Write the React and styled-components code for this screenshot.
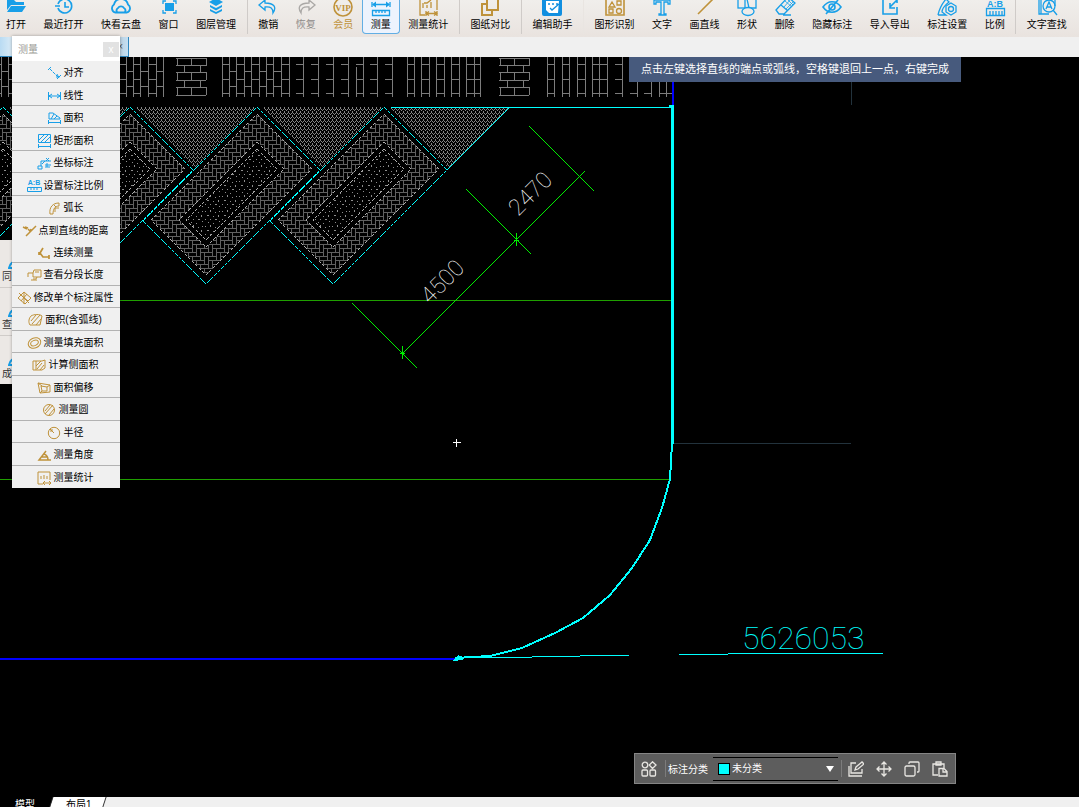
import React from "react";
import styled, { createGlobalStyle, css } from "styled-components";

const BLUE = "#189fe8";
const GOLD = "#bf923a";
const CYAN = "#00ffff";

const GlobalStyle = createGlobalStyle`
  * { box-sizing: border-box; }
  body {
    margin: 0;
    background: #000;
    font-family: "Liberation Sans", "Noto Sans CJK SC", sans-serif;
    font-size: 10px;
  }
  button, select {
    margin: 0;
    padding: 0;
    border: 0;
    background: none;
    font: inherit;
    color: inherit;
  }
`;

const Page = styled.div`
  display: flex;
  flex-direction: column;
  height: 100vh;
  overflow: hidden;
`;

const Toolbar = styled.header`
  display: flex;
  justify-content: space-between;
  align-items: flex-end;
  flex: none;
  height: 37px;
  padding: 0 6px 3px 0;
  overflow: hidden;
  background: linear-gradient(#f0eeeb, #e9e3df);
`;

const ToolButton = styled.button`
  display: flex;
  flex-direction: column;
  align-items: center;
  flex: none;
  gap: 2px;
  height: 40px;
  padding: 0 6px 2px;
  color: ${(p) => p.$color || "#000"};
  line-height: 14px;
  white-space: nowrap;
  ${(p) =>
    p.$active &&
    css`
      margin: 0 -3px;
      padding: 0 8px 1px;
      border: 1px solid #62aee4;
      border-top: 0;
      border-radius: 4px;
      background: #edf3fd;
    `}
  svg { display: block; flex: none; margin: 0 -1px; overflow: visible; }
`;

const ToolDivider = styled.i`
  flex: none;
  width: 1px;
  height: 40px;
  margin: 0 -1px;
  background: ${(p) => (p.$faint ? "#e9e5e1" : "#cfcbc8")};
`;

const FileStrip = styled.nav`
  display: flex;
  flex: none;
  height: 20px;
  background: #f0f0f0;
`;

const FileTab = styled.button`
  width: 129px;
  padding-right: 5px;
  border-right: 1px solid #2f86bd;
  border-bottom: 1px solid #2f86bd;
  background: linear-gradient(90deg, #b9dbf3, #dcecf7 10%, #b5c9d8 90%, #c5dff2);
  color: #555;
  text-align: right;
  line-height: 19px;
`;

const Canvas = styled.main`
  position: relative;
  flex: 1;
  min-height: 0;
  background: #000;
`;

const Drawing = styled.svg`
  display: block;
  width: 100%;
  height: 100%;
`;

const Hint = styled.p`
  position: absolute;
  top: 0;
  left: 629px;
  margin: 0;
  padding: 0 12px;
  background: #475a7d;
  color: #fff;
  font-size: 11px;
  line-height: 25px;
  white-space: nowrap;
`;

const SidePanel = styled.aside`
  position: absolute;
  top: 183px;
  left: 0;
  width: 60px;
  background: #ece8e5;
`;

const SideButton = styled.button`
  display: flex;
  flex-direction: column;
  align-items: flex-start;
  justify-content: flex-end;
  width: 100%;
  height: 48px;
  padding: 0 2px 2px;
  border-bottom: 1px solid #d0ccc9;
  color: #333;
  line-height: 16px;
  &:last-child { border-bottom: 0; }
  svg { margin-left: 6px; }
`;

const Palette = styled.section`
  position: absolute;
  top: -21px;
  left: 12px;
  width: 108px;
  background: #f0f0f0;
  box-shadow: 0 0 3px #0005;
`;

const PaletteHead = styled.header`
  display: flex;
  align-items: center;
  justify-content: space-between;
  height: 25px;
  padding: 0 1px 0 6px;
  background: #fff;
  color: #9a9a94;
`;

const CloseButton = styled.button`
  width: 16px;
  height: 15px;
  margin-top: 2px;
  background: #e2e2e2;
  color: #fff;
  line-height: 14px;
`;

const PaletteList = styled.div`
  display: grid;
  grid-auto-rows: 1fr;
  height: 427px;
`;

const PaletteButton = styled.button`
  display: flex;
  align-items: center;
  justify-content: center;
  gap: 2px;
  min-height: 0;
  padding: 3px 2px 0 0;
  border-bottom: 1px solid ${(p) => (p.$open ? "transparent" : "#b2b2b2")};
  color: #000;
  line-height: 14px;
  white-space: nowrap;
  &:last-child { border-bottom: 0; }
  svg { flex: none; }
`;

const Dock = styled.section`
  position: absolute;
  right: 123px;
  bottom: 13px;
  display: flex;
  align-items: center;
  width: 322px;
  height: 31px;
  padding: 0 7px 0 6px;
  border: 1px solid #858585;
  background: #5d5d5d;
  color: #fff;
`;

const DockDivider = styled.i`
  width: 1px;
  height: 17px;
  margin: ${(p) => p.$margin};
  background: #7c7c7c;
`;

const DockButton = styled.button`
  display: flex;
  & + & { margin-left: 12px; }
`;

const DockActions = styled.div`
  display: flex;
`;

const SelectWrap = styled.div`
  position: relative;
  flex: 1;
  height: 24px;
  margin-left: 5px;
  border: solid #000;
  border-width: 1px 0;
`;

const CategorySelect = styled.select`
  width: 100%;
  height: 22px;
  padding-left: 19px;
  appearance: none;
  color: #fff;
`;

const Swatch = styled.i`
  position: absolute;
  top: 5px;
  left: 5px;
  width: 12px;
  height: 12px;
  border: 1px solid #000;
  background: ${CYAN};
  pointer-events: none;
`;

const Arrow = styled.i`
  position: absolute;
  top: 8px;
  right: 4px;
  border: solid transparent;
  border-width: 6px 4px 0;
  border-top-color: #fff;
  pointer-events: none;
`;

const LayoutTabs = styled.footer`
  display: flex;
  flex: none;
  height: 10px;
  overflow: hidden;
  background: #f0f0f0;
`;

const LayoutTab = styled.button`
  position: relative;
  z-index: 0;
  flex: none;
  height: 16px;
  padding: ${(p) => (p.$current ? "0 16px 0 15px" : "0 12px 0 15px")};
  color: ${(p) => (p.$current ? "#fff" : "#000")};
  line-height: 16px;
  &::before {
    content: "";
    position: absolute;
    inset: 0 0 0 ${(p) => (p.$current ? "-10px" : "0")};
    z-index: -1;
    border-right: 1px solid #333;
    background: ${(p) => (p.$current ? "#000" : "#fff")};
    transform: skewX(-18deg);
  }
`;

function Glyph({ color, w = 22, h = 22, children, sw = 1.3 }) {
  return (
    <svg width={w} height={h} viewBox={`0 0 ${w} ${h}`} fill="none" stroke={color} strokeWidth={sw} aria-hidden="true">
      {children}
    </svg>
  );
}

const toolIcons = {
  folder: <g fill={BLUE} stroke="none"><path d="M2 16V6h7l2 2h8v3H6z" /><path d="M6 12h15l-4 6H2z" /></g>,
  history: <path strokeWidth="1.6" d="M5 10a7 7 0 1 1 0 4M2 12h5M12 8v5h4" />,
  cloud: <path strokeWidth="1.8" strokeLinejoin="round" d="M5 18.500a4.500 4.500 0 0 1-1-8a7.200 7.200 0 0 1 14 0a4.500 4.500 0 0 1-1 8zM7 18a3 3 0 0 1 1-4a3.500 3.500 0 0 1 6 0a3 3 0 0 1 1 4" />,
  window: <g><path fill={BLUE} stroke="none" d="M7 9h9v8H7z" /><path d="M5 10V7h3M15 7h3v3M18 16v3h-3M8 19H5v-3" /></g>,
  layers: <g fill={BLUE} stroke="none"><path d="M11 4l7 4-7 4-7-4z" /><path d="M5 11l6 3 6-3v2l-6 3.500L5 13zM5 15l6 3 6-3v2l-6 3L5 17z" /></g>,
  undo: <path d="M8 6l-6 5 6 5v-3c6-.5 8 1 8 6 4-6 1-10-8-10z" />,
  redo: <path d="M14 6l6 5-6 5v-3c-6-.5-8 1-8 6-4-6-1-10 8-10z" />,
  vip: <g><circle cx="11" cy="13" r="9" strokeWidth="1.600" /><text x="11" y="17" textAnchor="middle" fontSize="9" fontWeight="bold" fontFamily="Liberation Serif, serif" fill={GOLD} stroke="none">VIP</text></g>,
  measure: <g><path d="M2 8v5M20 8v5M3 10.500h16" /><path fill={BLUE} stroke="none" d="M2 10.500l4-3v6zM20 10.500l-4-3v6z" /><path d="M2.500 16.500h17v5h-17zM6 17v2M9 17v2M12 17v2M15 17v2" /></g>,
  stats: <g><path d="M8 21H3V5h17v11M6 14V9M10 14v-3M14 14V8M7 9l3 0 4-3" /><path d="M9 17v5M20 17v5M10 19.500h9M12 17.500l-3 2 3 2M17 17.500l3 2-3 2" /></g>,
  compare: <path strokeWidth="2" d="M7 10H3v11h10v-4M8 5h11v11H8z" />,
  editor: <g><rect x="1" y="2" width="20" height="20" rx="2" fill="#118fe0" stroke="none" /><path d="M5 7h13l-1 12H8l-3-3z" fill="#fff" stroke="none" /><path stroke="#1490df" d="M7 10h2M11 10h2M15 10h2M9 14l2 2 7-6" /></g>,
  shapes: <g><path strokeWidth="1.600" d="M2 4h18v17H2z" /><path d="M5 13l3-5 3 5zM13 7h4v4h-4zM5 15h4v4H5z" /><circle cx="15" cy="17" r="2.500" /></g>,
  letter: <path d="M3 6h16v4h-2V8h-4v12h2v1H8v-1h2V8H5v2H3z" />,
  line: <path strokeWidth="1.600" d="M4 20L19 5" />,
  forms: <g><rect x="2" y="5" width="7" height="9" /><path d="M11 5h9v9h-7z" /><ellipse cx="12" cy="17.500" rx="6" ry="4" fill="#eeebe8" /></g>,
  eraser: <g><path d="M2 16L14 3l7 6-11 11H5zM7 11l7 6M9 21h8" /><path strokeWidth=".8" d="M11 7l7 6M13 5l6 6M16 6l-6 7M19 8l-7 7" /></g>,
  hide: <g strokeWidth="1.600"><path d="M2 13c5-7 13-7 18 0-5 7-13 7-18 0zM5 20L17 6" /><circle cx="11" cy="13" r="3" /></g>,
  io: <g strokeWidth="1.600"><path d="M11 5H4v15h14v-7M18 6l-7 7M11 9v5h5M14 5h4v4" /></g>,
  marks: <g><path d="M2 21c1-5 3-10 8-16l3 3C8 12 6 16 6 18l4 3H2" /><path fill="#eeebe8" d="M15 9l5 3v6l-5 3-5-3v-6z" /><circle cx="15" cy="15" r="2.500" /></g>,
  scale: <g><path d="M2.500 14.500h18v7h-18zM6 17v4M9 17v4M12 17v4M15 17v4M18 17v4" /><text x="11" y="13" textAnchor="middle" fontSize="9" fontWeight="bold" fill={BLUE} stroke="none">A:B</text></g>,
  find: <g><path d="M9 20H3V4h16v8M5 4v16M3 20h10" /><circle cx="13" cy="12" r="6" /><path d="M17 16l4 5M10 15l3-7 3 7M11 13h4" /></g>,
};

const tools = [
  ["打开", "folder"], ["最近打开", "history"], ["快看云盘", "cloud"], ["窗口", "window"], ["图层管理", "layers"], "|",
  ["撤销", "undo"], ["恢复", "redo", "#aaa8a6", "#8d8a88"], ["会员", "vip", GOLD, GOLD], ["测量", "measure"], ["测量统计", "stats", GOLD], "|",
  ["图纸对比", "compare", GOLD], "|", ["编辑助手", "editor"], "faint",
  ["图形识别", "shapes", GOLD], ["文字", "letter"], ["画直线", "line", GOLD], ["形状", "forms"], ["删除", "eraser"],
  ["隐藏标注", "hide"], ["导入导出", "io"], ["标注设置", "marks"], ["比例", "scale"], "|", ["文字查找", "find"],
];

const paletteIcons = {
  align: <g><path strokeDasharray="3 1" d="M3 3l8 8" /><path d="M1 4l3-3M10 13l4-4M10 8l2 4M9 11h3" /></g>,
  linear: <path d="M1.500 3v8M13.500 3v8M2 7h11M5 5L2 7l3 2M10 5l3 2-3 2" />,
  area: <g><path d="M2 8V2h4l7 5v1zM4 8l3-5M7 8l3-3" /><path d="M1.500 9v4M13.500 9v4M2 11.500h11" /></g>,
  rect: <g><path d="M1.500.5h12v8h-12zM2 6l5-5M4 8l7-7M8 8l5-5" /><path d="M1.500 10v4M13.500 10v4M2 12.500h11" /></g>,
  coord: <path d="M1 10h4v3H1zM4 10V5h10M5 8l3-3M9 2l3 3M12 2L9 5M8 9h6M10 7v4M8 11h5" />,
  ratio: <g><text x="7" y="6" textAnchor="middle" fontSize="7" fontWeight="bold" fill={BLUE} stroke="none">A:B</text><path d="M.5 8.500h14v4H.5zM4 9v2M7 9v2M10 9v2" /></g>,
  arc: <path d="M3 13C2 6 6 2 12 2v3C8 5 6 8 6 13zM8 11V7h4M7 4l2 2" />,
  point: <path strokeWidth="1.500" d="M1 3l4 2M4 12L14 2M6 5l3 3M3 3l3 1M8 8l1-3" />,
  chain: <path strokeWidth="1.700" d="M6 2L3 7l3 4h6M12 9v4M2 6v3" />,
  segment: <path d="M1 9V5h5l1-3h7v7h-4l-1 2H6M6 5v4h4M8 4h4M4 12h6" />,
  modify: <path d="M1 7l6-6 7 6-6 6zM4 4l7 6M4 10l6-7M2 2l10 10M7 1v12" />,
  areaArc: <path d="M3 3c3-2 9-2 11 0l-2 9H2C0 9 1 5 3 3zM3 8l5-6M4 11l8-9M8 12l5-6" />,
  fill: <g><ellipse cx="7.500" cy="7" rx="6.500" ry="5" transform="rotate(-25 7.500 7)" /><ellipse cx="7.500" cy="7" rx="4" ry="2.600" transform="rotate(-25 7.500 7)" /></g>,
  side: <path d="M1 3h3v9H1zM4 3h6l3-1v8l-3 2H4M4 8l5-5M5 11l5-6M8 12l4-5" />,
  offset: <path d="M1 2l12 2v7L3 12zM4 5l6 1v4H5zM1 2l4 3M13 4l-3 2M3 12l2-2" />,
  circle: <g><circle cx="7" cy="7" r="5.500" /><path d="M3 8l5-6M3 11l8-9M7 12l5-6" /></g>,
  radius: <g><circle cx="7" cy="7" r="5.700" /><path d="M7 7L3 3M4 6V4h2" /></g>,
  angle: <path strokeWidth="1.500" d="M14 12H2l7-9M7 6c3 1 4 3 4 6M5 9h5" />,
  total: <path d="M13 9V1H1v12h5M4 8V5M7 8V4M10 8V5M6 12h8M8 10l-2 2 2 2M12 10l2 2-2 2" />,
};

const measures = [
  ["对齐", "align", BLUE], ["线性", "linear", BLUE], ["面积", "area", BLUE], ["矩形面积", "rect", BLUE], ["坐标标注", "coord", BLUE],
  ["设置标注比例", "ratio", BLUE], ["弧长", "arc"], ["点到直线的距离", "point"], ["连续测量", "chain"], ["查看分段长度", "segment"],
  ["修改单个标注属性", "modify"], ["面积(含弧线)", "areaArc"], ["测量填充面积", "fill"], ["计算侧面积", "side"], ["面积偏移", "offset"],
  ["测量圆", "circle"], ["半径", "radius"], ["测量角度", "angle"], ["测量统计", "total"],
];

/* Paving strip: upright joints with rungs staggered between neighbouring columns. */
const slatRuns = [
  [-6, 1, 8, 15, 119, 126, 133, 140, 148, 156, 163],
  [222, 229, 236, 244, 251, 259, 266, 273, 281, 289],
];
const pairedSlats = [[407, 414], [421, 429], [436, 444], [451, 459], [466, 474], [547, 554], [562, 569], [577, 585], [592, 599]];
const wideSlats = [303, 318, 333, 348, 363, 377, 392, 480, 607, 622, 637, 651];

function slatPath() {
  let d = "";
  slatRuns.forEach((run) => {
    run.forEach((x, i) => {
      d += `M${x}.5 57V97`;
      const next = run[i + 1];
      if (next && next - x < 20) {
        (i % 2 ? [71, 86] : [64, 79, 93]).forEach((y) => { d += `M${x} ${y}.5H${next}`; });
      }
    });
  });
  pairedSlats.forEach(([a, b]) => {
    d += `M${a}.5 57V97M${b}.5 57V97`;
    [64, 79, 93].forEach((y) => { d += `M${a} ${y}.5H${b}`; });
  });
  wideSlats.forEach((x) => {
    d += `M${x}.5 57V97`;
    [64, 79, 93].forEach((y) => { d += `M${x - 7} ${y}.5h7`; });
  });
  d += "M356.500 67V97M659.500 57V97M666.500 57V97M659 64.500h7M659 79.500h7M659 93.500h13";
  return d;
}

function brickPath(x0) {
  let d = "";
  [58, 65, 72, 80, 87, 95].forEach((y, i) => {
    d += `M${x0} ${y}.5h30`;
    if (i < 5) (i % 2 ? [8, 24] : [1, 15, 30]).forEach((x) => { d += `M${x0 + x}.5 ${y}v8`; });
  });
  return d;
}

/* Herringbone of 2:1 blocks on a four-cell repeat. */
function herringbonePath(a) {
  let d = "";
  for (let y = -2; y < 6; y += 1) {
    for (let x = -2; x < 6; x += 1) {
      const k = (((x - y) % 4) + 4) % 4;
      const px = x * a + 0.5;
      const py = y * a + 0.5;
      if (k === 0) d += `M${px} ${py}h${2 * a}v${a}`;
      if (k === 3) d += `M${px} ${py}h${a}v${2 * a}`;
    }
  }
  return d;
}

function Paver({ shift }) {
  return (
    <g transform={`translate(${shift} 0)`}>
      <path fill="url(#hatch)" d="M263 107H382L321 168z" />
      <path fill="url(#weave)" d="M257 114L312 169 206 275 151 220z" />
      <path fill="#000" d="M257 142L284 169 206 247 179 220z" />
      <path fill="url(#speckle)" d="M257 149L277 169 206 240 186 220z" />
      <g fill="none" stroke="#b0b0b0" strokeDasharray="3 2">
        <path d="M257 114L312 169 206 275 151 220z" />
        <path d="M257 142L284 169 206 247 179 220z" />
        <path d="M257 149L277 169 206 240 186 220z" />
      </g>
      <path fill="none" stroke={CYAN} strokeDasharray="4 1" d="M257 107L320 170 206 284 143 221z" />
    </g>
  );
}

function SitePlan() {
  return (
    <Drawing viewBox="0 57 1079 740" preserveAspectRatio="xMinYMin slice" shapeRendering="crispEdges" role="img" aria-label="图纸">
      <defs>
        <pattern id="weave" width="16" height="16" patternUnits="userSpaceOnUse">
          <path d={herringbonePath(4)} fill="none" stroke="#606060" />
        </pattern>
        <pattern id="hatch" width="4" height="4" patternUnits="userSpaceOnUse">
          <path fill="#858585" d="M0 0h1v1H0zM1 1h1v1H1zM2 2h1v1H2zM3 1h1v1H3zM0 3h1v1H0z" />
        </pattern>
        <pattern id="speckle" width="17" height="15" patternUnits="userSpaceOnUse">
          <path fill="#8c8c8c" d="M1 1h1v1H1zM6 0h1v2H6zM11 2h1v1h-1zM15 1h1v1h-1zM3 5h2v1H3zM9 6h1v1H9zM14 5h1v2h-1zM1 9h1v1H1zM6 9h1v1H6zM11 9h2v1h-2zM15 11h1v1h-1zM4 12h1v1H4zM9 13h1v1H9z" />
        </pattern>
      </defs>
      <path d={slatPath()} fill="none" stroke="#7c7c7c" />
      <path d={brickPath(176) + brickPath(499)} fill="none" stroke="#7c7c7c" />
      {[-254, -127, 0, 127].map((s) => <Paver key={s} shift={s} />)}
      <path fill="none" stroke={CYAN} d="M447 170L510 107" />
      <path fill="none" stroke={CYAN} d="M391 107.500H672" />
      <path fill="none" stroke="#1f9f00" d="M0 300.500H671M0 479.500H670" />
      <path fill="none" stroke="#22323c" d="M851.500 82V105M674 443.500H851" />
      <g fill="none" stroke="#00f000">
        <path d="M403 353L585 171M352 303L417 368M466 189L531 254M529 126L594 191" />
        <path d="M402.500 346V359M516.500 233V246M400 353.500h5M514 240.500h5" />
      </g>
      <g fill="#fff" fontFamily="Roboto, sans-serif" fontSize="23" fontWeight="100">
        <text transform="translate(430 305) rotate(-45)">4500</text>
        <text transform="translate(518 217) rotate(-45)">2470</text>
      </g>
      <path fill="none" stroke="#fff" d="M453 442.500h8M456.500 439v8" />
      <path fill="none" stroke="#0000ff" strokeWidth="2" d="M672.500 82V107M0 658.500H456" />
      <path fill="none" stroke={CYAN} strokeWidth="3" d="M672.500 105V444" />
      <path fill="none" stroke={CYAN} strokeWidth="2" d="M672 444L670 479 662 508 650 540 632 568 610 595 583 618 555 633 522 648 490 656 455 658" />
      <path fill={CYAN} d="M669 105h4v3h-4zM453 661l5-6 5 2v3z" />
      <path fill="none" stroke={CYAN} d="M456 657.500H532M532 656.500H580M580 655.500H629M679 654.500H728M728 653.500H883" />
      <text x="742" y="649" fill={CYAN} fontFamily="Roboto, sans-serif" fontSize="32" fontWeight="100">5626053</text>
    </Drawing>
  );
}

const dockIcon = { color: "#e8e6e2", w: 16, h: 16 };

export default function App() {
  return (
    <Page>
      <GlobalStyle />
      <Toolbar>
        {tools.map((t, i) =>
          typeof t === "string" ? (
            <ToolDivider key={i} $faint={t === "faint"} />
          ) : (
            <ToolButton key={t[0]} type="button" $active={t[0] === "测量"} $color={t[3]}>
              <Glyph color={t[2] || BLUE}>{toolIcons[t[1]]}</Glyph>
              {t[0]}
            </ToolButton>
          )
        )}
      </Toolbar>
      <FileStrip>
        <FileTab type="button" aria-label="关闭图纸">×</FileTab>
      </FileStrip>
      <Canvas>
        <SitePlan />
        <Hint>点击左键选择直线的端点或弧线，空格键退回上一点，右键完成</Hint>
        <SidePanel>
          {["同", "查", "成"].map((name) => (
            <SideButton key={name} type="button">
              <Glyph color={BLUE} w={20} h={20} sw={2}><circle cx="10" cy="6" r="4" /><path d="M1 19c1-5 4-7 9-7s8 2 9 7z" /></Glyph>
              {name}
            </SideButton>
          ))}
        </SidePanel>
        <Palette>
          <PaletteHead>
            测量
            <CloseButton type="button" aria-label="关闭">x</CloseButton>
          </PaletteHead>
          <PaletteList>
            {measures.map(([name, icon, color]) => (
              <PaletteButton key={name} type="button" $open={icon === "point"}>
                <Glyph color={color || GOLD} w={15} h={14} sw={1}>{paletteIcons[icon]}</Glyph>
                {name}
              </PaletteButton>
            ))}
          </PaletteList>
        </Palette>
        <Dock>
          <DockButton type="button" aria-label="分类">
            <Glyph {...dockIcon}><circle cx="4" cy="4" r="2.800" /><path d="M11.500 .8l3.500 3.200-3.500 3.500L8.300 4z" /><rect x="1" y="9" width="5.500" height="6" rx="1" /><rect x="9" y="9" width="5.500" height="6" rx="1" /></Glyph>
          </DockButton>
          <DockDivider $margin="0 2px 0 8px" />
          <label htmlFor="category">标注分类</label>
          <SelectWrap>
            <CategorySelect id="category"><option>未分类</option></CategorySelect>
            <Swatch />
            <Arrow />
          </SelectWrap>
          <DockDivider $margin="0 6px 0 3px" />
          <DockActions>
            <DockButton type="button" aria-label="编辑"><Glyph {...dockIcon}><path d="M8 2H3v10h11V8M1 5v10h13M7 9l1-3 6-5 2 2-6 5z" /></Glyph></DockButton>
            <DockButton type="button" aria-label="移动"><Glyph {...dockIcon}><path d="M8 1v14M1 8h14M5.500 3.500L8 1l2.500 2.500M5.500 12.500L8 15l2.500-2.500M3.500 5.500L1 8l2.500 2.500M12.500 5.500L15 8l-2.500 2.500" /></Glyph></DockButton>
            <DockButton type="button" aria-label="复制"><Glyph {...dockIcon}><rect x="1" y="5" width="10" height="10" rx="1.500" /><path d="M5 3V2q0-1 1-1h8q1 0 1 1v8q0 1-1 1h-1" /></Glyph></DockButton>
            <DockButton type="button" aria-label="粘贴"><Glyph {...dockIcon}><path d="M6 14H1V3h11v4M4 4V1h5v3zM7 7.500h5l3 3V15H7zM11 7v4h4" /></Glyph></DockButton>
          </DockActions>
        </Dock>
      </Canvas>
      <LayoutTabs>
        <LayoutTab type="button" $current>模型</LayoutTab>
        <LayoutTab type="button">布局1</LayoutTab>
      </LayoutTabs>
    </Page>
  );
}
